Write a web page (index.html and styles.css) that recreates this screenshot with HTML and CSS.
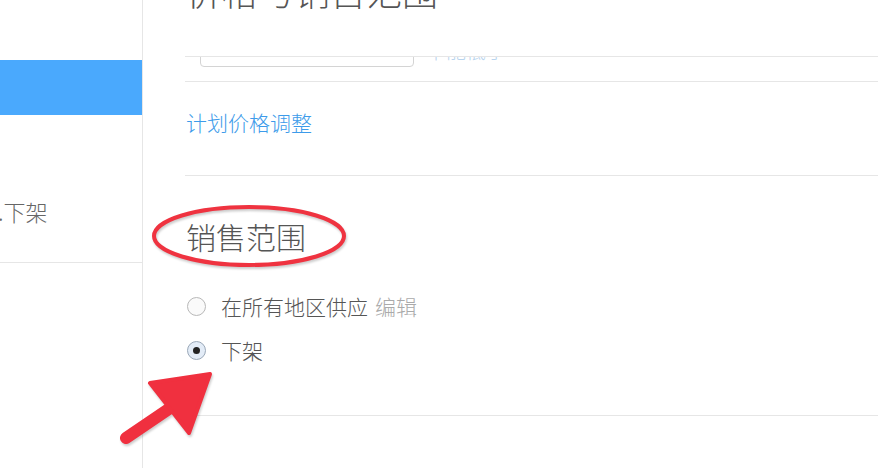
FILE: index.html
```html
<!DOCTYPE html>
<html lang="zh-CN">
<head>
    <meta charset="UTF-8">
    <meta name="viewport" content="width=device-width, initial-scale=1.0">
    <title>销售范围</title>
    <link rel="stylesheet" href="styles.css">
</head>
<body>
    <div class="page">
        <div class="sidebar">
            <div class="side-item"></div>
            <div class="side-item active"></div>
            <div class="side-item text">.下架</div>
        </div>

        <div class="main">
            <div class="title-row">
                <h2>价格与销售范围</h2>
            </div>

            <div class="price-row">
                <div class="price-input"></div>
                <span class="price-hint">不能低于</span>
            </div>

            <div class="link-row">
                <a href="#" class="link">计划价格调整</a>
            </div>

            <div class="range">
                <h3 class="range-title">销售范围</h3>

                <label class="option">
                    <span class="radio"></span>
                    <span>在所有地区供应</span>
                    <span class="edit">编辑</span>
                </label>
                <label class="option">
                    <span class="radio checked"></span>
                    <span>下架</span>
                </label>
            </div>
        </div>

        <!-- 标注 -->
        <svg class="mark-circle" width="200" height="68" viewBox="0 0 200 68">
            <ellipse cx="100" cy="34" rx="95" ry="29" fill="none" stroke="#ef3340" stroke-width="4"/>
        </svg>
        <svg class="mark-arrow" width="110" height="90" viewBox="0 0 110 90">
            <line x1="14" y1="76" x2="70" y2="38" stroke="#f0303f" stroke-width="12" stroke-linecap="round"/>
            <path d="M38 21 L98 12 L77 71 Z" fill="#f0303f" stroke="#f0303f" stroke-width="4" stroke-linejoin="round"/>
        </svg>
    </div>
</body>
</html>
```

FILE: styles.css
```css
body {
    margin: 0;
    background: #fff;
    font-family: "Noto Sans CJK SC", "Liberation Sans", sans-serif;
    font-weight: 300;
    color: #555;
}
.page {
    position: relative;
    display: flex;
    width: 878px;
    height: 468px;
    overflow: hidden;
}
.sidebar {
    width: 142px;
    flex-shrink: 0;
    border-right: 1px solid #e6e6e6;
}
.side-item {
    height: 60px;
}
.side-item.active {
    height: 55px;
    background-color: #4aa9fd;
}
.side-item.text {
    height: 148px;
    border-bottom: 1px solid #e6e6e6;
    box-sizing: border-box;
    padding-top: 86px;
    margin-left: -2px;
    font-size: 22px;
    line-height: 20px;
    color: #666;
}
.main {
    flex: 1;
    padding-left: 42px;
}
.title-row {
    height: 56px;
    overflow: hidden;
    border-bottom: 1px solid #e6e6e6;
}
.title-row h2 {
    margin: -30px 0 0 1px;
    font-size: 36px;
    line-height: 40px;
    font-weight: 300;
    color: #555;
}
.price-row {
    display: flex;
    align-items: flex-end;
    height: 24px;
    overflow: hidden;
    border-bottom: 1px solid #e6e6e6;
}
.price-input {
    width: 212px;
    height: 30px;
    margin: 0 0 14px 15px;
    border: 1px solid #d4d4d4;
    border-radius: 4px;
}
.price-hint {
    margin: 0 0 12px 12px;
    font-size: 20px;
    line-height: 20px;
    color: #b8d4ee;
    transform: translateY(-8px);
}
.link-row {
    height: 94px;
    border-bottom: 1px solid #e6e6e6;
    box-sizing: border-box;
    padding-top: 26px;
}
.link {
    margin-left: 1px;
    font-size: 21px;
    line-height: 28px;
    color: #3d9bea;
    text-decoration: none;
}
.range {
    height: 240px;
    border-bottom: 1px solid #e6e6e6;
    box-sizing: border-box;
    padding-top: 40px;
}
.range-title {
    margin: 0 0 36px 1px;
    font-size: 30px;
    line-height: 40px;
    font-weight: 300;
    color: #555;
}
.option {
    display: flex;
    align-items: center;
    height: 28px;
    margin-bottom: 16px;
    font-size: 21px;
    color: #555;
}
.edit {
    margin-left: 7px;
    color: #aaa;
}
.radio {
    width: 17px;
    height: 17px;
    margin: 0 15px 0 2px;
    border: 1px solid #b8b8b8;
    border-radius: 50%;
    background: #fafafa;
    display: flex;
    align-items: center;
    justify-content: center;
}
.radio.checked {
    background: #e3ecf7;
    border-color: #9aa8b8;
}
.radio.checked::after {
    content: "";
    width: 7px;
    height: 7px;
    border-radius: 50%;
    background: #222;
}
.mark-circle {
    position: absolute;
    left: 149px;
    top: 202px;
    filter: drop-shadow(1px 2px 1px rgba(0, 0, 0, 0.2));
}
.mark-arrow {
    position: absolute;
    left: 112px;
    top: 362px;
    filter: drop-shadow(1px 2px 1px rgba(0, 0, 0, 0.2));
}
```
